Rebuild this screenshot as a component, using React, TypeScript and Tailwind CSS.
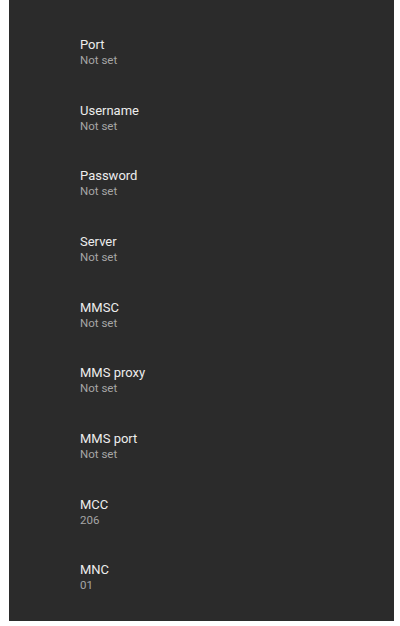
const rows = [
  { title: 'Port', value: 'Not set' },
  { title: 'Username', value: 'Not set' },
  { title: 'Password', value: 'Not set' },
  { title: 'Server', value: 'Not set' },
  { title: 'MMSC', value: 'Not set' },
  { title: 'MMS proxy', value: 'Not set' },
  { title: 'MMS port', value: 'Not set' },
  { title: 'MCC', value: '206' },
  { title: 'MNC', value: '01' },
]

export default function App() {
  return (
    <div className="h-[626px] w-[400px] bg-white" style={{ fontFamily: 'Roboto, "Noto Sans", sans-serif' }}>
      <div className="ml-[9px] flex h-[621px] w-[385px] flex-col overflow-hidden bg-[#2b2b2b] pl-[71px] pt-[37px]">
        {rows.map((row) => (
          <div key={row.title} className="h-[65.67px] shrink-0">
            <p className="text-[13px] leading-[16px] text-[#ededed]">{row.title}</p>
            <p className="text-[11.5px] leading-[15px] text-[#a6a6a6]">{row.value}</p>
          </div>
        ))}
      </div>
    </div>
  )
}
